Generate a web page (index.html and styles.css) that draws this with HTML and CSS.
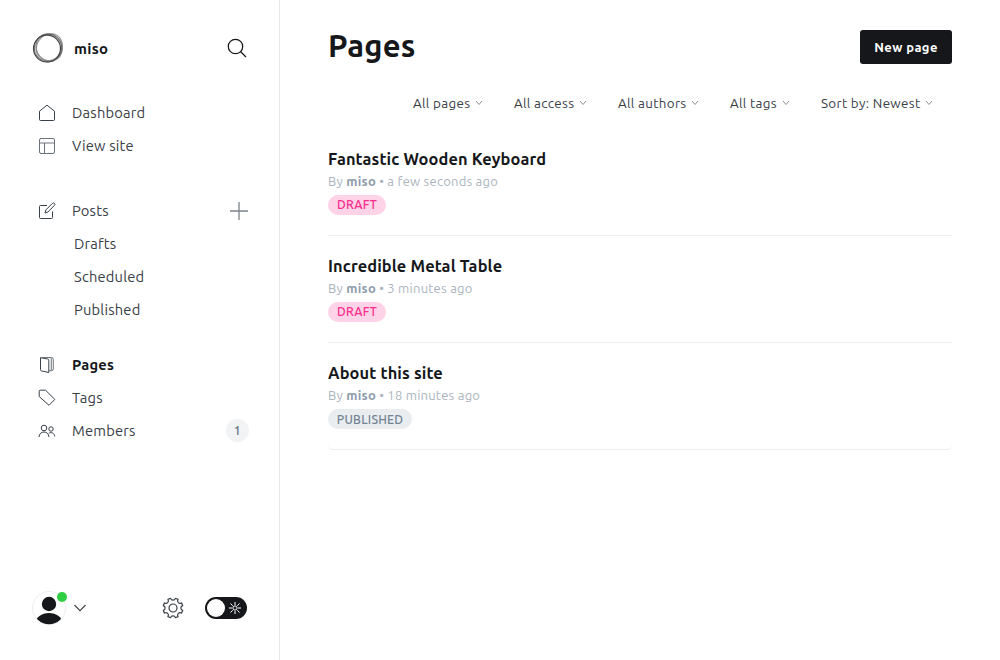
FILE: index.html
```html
<!DOCTYPE html>
<html lang="en">
<head>
<meta charset="utf-8">
<title>Pages</title>
<link rel="stylesheet" href="styles.css">
</head>
<body>
<div class="app">
  <aside class="sidebar">
    <header class="brand">
      <svg class="logo" width="32" height="32" viewBox="0 0 32 32" fill="none">
        <ellipse cx="17.400" cy="15" rx="12.500" ry="14" transform="rotate(35 17 15)" stroke="#999" stroke-width="1.400"/>
        <ellipse cx="16.800" cy="15.400" rx="12.700" ry="13.900" transform="rotate(-35 17 15)" stroke="#888" stroke-width="1.200"/>
        <ellipse cx="16" cy="16" rx="13.800" ry="14" stroke="#666" stroke-width="1"/>
        <ellipse cx="15" cy="16.600" rx="13.500" ry="13.400" stroke="#444" stroke-width="1.200"/>
      </svg>
      <span class="brand-name">miso</span>
      <svg class="search" width="20" height="20" viewBox="0 0 20 20" fill="none" stroke="#15171a" stroke-width="1.25" stroke-linecap="round"><circle cx="8.5" cy="8.5" r="7.2"/><path d="M13.7 13.7l5 5"/></svg>
    </header>
    <nav class="nav">
      <ul class="group">
        <li class="item"><svg class="icon" viewBox="0 0 18 18"><path d="M1.5 7.2 9 1.2l7.500 6V15.500a1 1 0 0 1-1 1h-13a1 1 0 0 1-1-1z"/></svg><span class="label">Dashboard</span></li>
        <li class="item"><svg class="icon muted" viewBox="0 0 18 18"><rect x="1.500" y="1.500" width="15" height="15" rx="1.500"/><path d="M1.500 6h15M6.500 6v10.500"/></svg><span class="label">View site</span></li>
      </ul>
      <ul class="group posts">
        <li class="item"><svg class="icon" viewBox="0 0 18 18"><path d="M9 3.500H2.500a1 1 0 0 0-1 1v11a1 1 0 0 0 1 1h11a1 1 0 0 0 1-1V9.500"/><path d="M7 11l.9-3.100 6.500-6.500a1.400 1.400 0 0 1 2 2L9.900 10z"/></svg><span class="label">Posts</span>
          <svg class="plus" width="18" height="18" viewBox="0 0 18 18"><path d="M0 9h18M9 0v18" stroke="#7c838a" stroke-width="1.300"/></svg></li>
        <li class="item sub"><span class="label">Drafts</span></li>
        <li class="item sub"><span class="label">Scheduled</span></li>
        <li class="item sub"><span class="label">Published</span></li>
      </ul>
      <ul class="group">
        <li class="item active"><svg class="icon" viewBox="0 0 18 18"><path d="M2.500 1.700 9.800 3a1.200 1.200 0 0 1 1 1.200V16.500L3.500 14.900a1.200 1.200 0 0 1-1-1.200z"/><path d="M2.500 1.500H13.500a1.800 1.800 0 0 1 1.800 1.800V12.900a1.800 1.800 0 0 1-1.800 1.800h-2.700M12 1.500a1.300 1.300 0 0 1 1.300 1.300v11.700" stroke="#6c737a"/></svg><span class="label">Pages</span></li>
        <li class="item"><svg class="icon" viewBox="0 0 18 18"><path d="M1.200 2.200a1 1 0 0 1 1-1H7.500l9.300 9.200-5.800 5.900L1.200 7.500z"/></svg><span class="label">Tags</span></li>
        <li class="item"><svg class="icon" viewBox="0 0 18 18"><circle cx="6" cy="6" r="2.800"/><path d="M1 15c.4-3.300 2.300-5 5-5s4.600 1.700 5 5"/><circle cx="13" cy="7" r="2.200"/><path d="M10.800 11.200c2.800-1.400 5.400-.2 6 3.300"/></svg><span class="label">Members</span><span class="count">1</span></li>
      </ul>
    </nav>
    <footer class="user-bar">
      <div class="avatar">
        <svg width="34" height="34" viewBox="0 0 34 34"><defs><clipPath id="round"><circle cx="17" cy="17" r="16.200"/></clipPath></defs><circle cx="17" cy="17" r="16.500" fill="#fff" stroke="#e8eaed" stroke-width=".8"/><g clip-path="url(#round)" fill="#15171a"><circle cx="17" cy="13" r="7.200"/><ellipse cx="17" cy="32.500" rx="13.500" ry="10.500"/></g></svg>
        <span class="status"></span>
      </div>
      <svg class="user-chevron" width="12" height="8" viewBox="0 0 12 8"><path d="M.5 1 6 6.700 11.500 1" fill="none" stroke="#394047" stroke-width="1.100"/></svg>
      <svg class="gear" width="22" height="22" viewBox="0 0 22 22" fill="none" stroke="#394047" stroke-width="1.200" stroke-linejoin="round"><circle cx="11" cy="11" r="4"/><path d="M8.600 1.300a2.500 2.500 0 0 0 4.800 0l2.700 1.100a2.500 2.500 0 0 0 3.500 3.500l1.100 2.700a2.500 2.500 0 0 0 0 4.800l-1.100 2.700a2.500 2.500 0 0 0-3.500 3.500l-2.700 1.100a2.500 2.500 0 0 0-4.800 0l-2.700-1.100a2.500 2.500 0 0 0-3.500-3.500l-1.100-2.700a2.500 2.500 0 0 0 0-4.800l1.100-2.700a2.500 2.500 0 0 0 3.500-3.500z"/></svg>
      <div class="toggle"><span class="knob"></span><svg width="14" height="14" viewBox="0 0 14 14" fill="none" stroke="#fff" stroke-width="1"><circle cx="7" cy="7" r="2.100"/><path d="M7 1v3M7 10v3M1 7h3M10 7h3M2.500 2.500l2.200 2.200M9.300 9.300l2.200 2.200M2.500 11.500l2.200-2.200M9.300 4.700l2.200-2.200"/></svg></div>
    </footer>
  </aside>
  <main class="content">
    <header class="title-bar"><h1 class="title">Pages</h1><button class="new-page">New page</button></header>
    <div class="filters">
      <div class="filter f-pages"><span>All pages</span><svg viewBox="0 0 8 6"><path d="M1 1l3 3.500L7 1"/></svg></div>
      <div class="filter f-access"><span>All access</span><svg viewBox="0 0 8 6"><path d="M1 1l3 3.500L7 1"/></svg></div>
      <div class="filter f-authors"><span>All authors</span><svg viewBox="0 0 8 6"><path d="M1 1l3 3.500L7 1"/></svg></div>
      <div class="filter f-tags"><span>All tags</span><svg viewBox="0 0 8 6"><path d="M1 1l3 3.500L7 1"/></svg></div>
      <div class="filter f-sort"><span>Sort by: Newest</span><svg viewBox="0 0 8 6"><path d="M1 1l3 3.500L7 1"/></svg></div>
    </div>
    <section class="list">
      <article class="entry"><h2 class="entry-title">Fantastic Wooden Keyboard</h2><p class="meta">By <b>miso</b> • a few seconds ago</p><span class="badge draft">DRAFT</span></article>
      <article class="entry"><h2 class="entry-title">Incredible Metal Table</h2><p class="meta">By <b>miso</b> • 3 minutes ago</p><span class="badge draft">DRAFT</span></article>
      <article class="entry"><h2 class="entry-title">About this site</h2><p class="meta">By <b>miso</b> • 18 minutes ago</p><span class="badge published">PUBLISHED</span></article>
    </section>
  </main>
</div>
</body>
</html>
```
FILE: styles.css
```css
* { box-sizing: border-box; }
body { margin: 0; background: #fff; color: #15171a; font-family: Ubuntu, "Noto Sans", sans-serif; }
ul, h1, h2, p { margin: 0; padding: 0; list-style: none; }
svg { flex: none; }
.app { display: flex; height: 660px; }
.sidebar { width: 280px; flex: none; border-right: 1px solid #e6e7e9; display: flex; flex-direction: column; padding: 32px 30px 34px 32px; }
.brand { display: flex; align-items: center; height: 32px; }
.brand-name { margin: 2px 0 0 10px; font-size: 15px; font-weight: 700; line-height: 20px; letter-spacing: .3px; }
.search { margin-left: auto; margin-right: 2px; }
.nav { padding-top: 32px; }
.group { margin-bottom: 32px; }
.posts { margin-bottom: 22px; }
.item { display: flex; align-items: center; height: 33px; padding-left: 6px; color: #394047; font-size: 14.7px; letter-spacing: .2px; }
.icon { width: 18px; height: 18px; margin-right: 16px; fill: none; stroke: #394047; stroke-width: 1; stroke-linejoin: round; }
.muted { stroke: #6c737a; }
.sub { padding-left: 42px; }
.active { color: #15171a; font-weight: 700; }
.plus { margin-left: auto; margin-right: 1px; }
.count { margin-left: auto; width: 23px; height: 23px; border-radius: 12px; background: #f1f3f4; color: #626d79; font-size: 12.5px; font-weight: 500; line-height: 23px; text-align: center; }
.user-bar { display: flex; align-items: center; height: 36px; margin-top: auto; }
.avatar { position: relative; width: 34px; height: 34px; }
.status { position: absolute; top: 1px; right: -1px; width: 10px; height: 10px; border-radius: 50%; background: #30cf43; }
.user-chevron { margin-left: 8px; }
.gear { margin-left: auto; }
.toggle { display: flex; align-items: center; justify-content: space-between; width: 42px; height: 22px; margin: 0 2px 0 21px; padding: 0 5px 0 2px; border-radius: 11px; background: #15171a; }
.knob { width: 18px; height: 18px; border-radius: 50%; background: #fff; }
.content { flex: 1; padding: 26px 48px 0; }
.title-bar { display: flex; align-items: center; justify-content: space-between; height: 42px; }
.title { font-size: 31px; font-weight: 700; line-height: 40px; height: 42px; letter-spacing: .2px; }
.new-page { width: 92px; height: 34px; padding: 0; border: 0; border-radius: 3px; background: #15171a; color: #fff; font: 700 13px/34px Ubuntu, "Noto Sans", sans-serif; letter-spacing: .4px; }
.filters { display: flex; height: 24px; margin: 23px 19px 0 85px; }
.filter { display: flex; align-items: center; justify-content: space-between; color: #394047; font-size: 13.4px; letter-spacing: .32px; white-space: nowrap; }
.filter svg { width: 8px; height: 6px; fill: none; stroke: #8b9299; stroke-width: 1; }
.f-pages { width: 70px; margin-right: 31px; }
.f-access { width: 73px; margin-right: 31px; }
.f-authors { width: 81px; margin-right: 31px; }
.f-tags { width: 60px; margin-right: 31px; }
.f-sort { width: 112px; }
.list { padding-top: 14px; }
.entry { height: 107px; padding-top: 19px; border-bottom: 1px solid #ebeef0; }
.entry:last-child { border-radius: 5px; }
.entry-title { font-size: 16.4px; font-weight: 700; line-height: 22px; letter-spacing: .12px; white-space: nowrap; }
.meta { color: #abb4be; font-size: 13px; line-height: 22px; letter-spacing: .24px; }
.meta b { color: #8e9cac; font-weight: 700; }
.badge { display: block; width: 58px; height: 20px; margin-top: 3px; border-radius: 10px; font-size: 12.2px; font-weight: 500; line-height: 20px; letter-spacing: .2px; text-align: center; }
.draft { background: #ffd3e7; color: #fb2d8d; }
.published { width: 84px; background: #e9edf0; color: #738393; line-height: 21px; }
```
